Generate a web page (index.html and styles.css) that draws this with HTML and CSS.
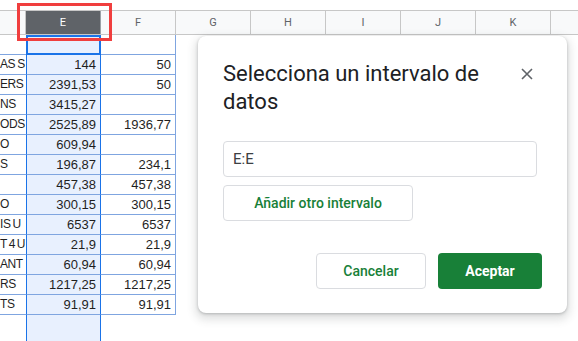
FILE: index.html
```html
<!DOCTYPE html>
<html lang="es">
<head>
    <meta charset="UTF-8">
    <meta name="viewport" content="width=device-width, initial-scale=1.0">
    <title>Seleccionar intervalo</title>
    <link rel="stylesheet" href="styles.css">
</head>
<body>
    <div class="sheet">
        <!-- Column headers -->
        <div class="col-head">
            <div class="hcell narrow"></div>
            <div class="hcell selected">E</div>
            <div class="hcell">F</div>
            <div class="hcell">G</div>
            <div class="hcell">H</div>
            <div class="hcell">I</div>
            <div class="hcell">J</div>
            <div class="hcell">K</div>
            <div class="hcell last"></div>
        </div>

        <!-- Rows -->
        <div class="row first">
            <div class="cell col-d"></div>
            <div class="cell col-e active"></div>
            <div class="cell col-f"></div>
        </div>
        <div class="row data">
            <div class="cell col-d">AS S</div>
            <div class="cell col-e">144</div>
            <div class="cell col-f">50</div>
        </div>
        <div class="row data">
            <div class="cell col-d">ERS</div>
            <div class="cell col-e">2391,53</div>
            <div class="cell col-f">50</div>
        </div>
        <div class="row data">
            <div class="cell col-d">NS</div>
            <div class="cell col-e">3415,27</div>
            <div class="cell col-f"></div>
        </div>
        <div class="row data">
            <div class="cell col-d">ODS</div>
            <div class="cell col-e">2525,89</div>
            <div class="cell col-f">1936,77</div>
        </div>
        <div class="row data">
            <div class="cell col-d">O</div>
            <div class="cell col-e">609,94</div>
            <div class="cell col-f"></div>
        </div>
        <div class="row data">
            <div class="cell col-d">S</div>
            <div class="cell col-e">196,87</div>
            <div class="cell col-f">234,1</div>
        </div>
        <div class="row data">
            <div class="cell col-d"></div>
            <div class="cell col-e">457,38</div>
            <div class="cell col-f">457,38</div>
        </div>
        <div class="row data">
            <div class="cell col-d">O</div>
            <div class="cell col-e">300,15</div>
            <div class="cell col-f">300,15</div>
        </div>
        <div class="row data">
            <div class="cell col-d">IS U</div>
            <div class="cell col-e">6537</div>
            <div class="cell col-f">6537</div>
        </div>
        <div class="row data">
            <div class="cell col-d">T 4 U</div>
            <div class="cell col-e">21,9</div>
            <div class="cell col-f">21,9</div>
        </div>
        <div class="row data">
            <div class="cell col-d">ANT</div>
            <div class="cell col-e">60,94</div>
            <div class="cell col-f">60,94</div>
        </div>
        <div class="row data">
            <div class="cell col-d">RS</div>
            <div class="cell col-e">1217,25</div>
            <div class="cell col-f">1217,25</div>
        </div>
        <div class="row data">
            <div class="cell col-d">TS</div>
            <div class="cell col-e">91,91</div>
            <div class="cell col-f">91,91</div>
        </div>
        <div class="row">
            <div class="cell col-d"></div>
            <div class="cell col-e"></div>
        </div>
        <div class="row">
            <div class="cell col-d"></div>
            <div class="cell col-e"></div>
        </div>
    </div>

    <!-- Highlight around the column header -->
    <div class="highlight"></div>

    <!-- Range dialog -->
    <div class="dialog">
        <div class="dialog-head">
            <h2>Selecciona un intervalo de datos</h2>
            <button class="close" type="button" aria-label="Cerrar">
                <svg width="12" height="12" viewBox="0 0 12 12">
                    <path d="M1 1 L11 11 M11 1 L1 11" stroke="#5f6368" stroke-width="1.6" fill="none"/>
                </svg>
            </button>
        </div>
        <div class="range-input">E:E</div>
        <button class="btn add" type="button">Añadir otro intervalo</button>
        <div class="actions">
            <button class="btn cancel" type="button">Cancelar</button>
            <button class="btn ok" type="button">Aceptar</button>
        </div>
    </div>
</body>
</html>
```

FILE: styles.css
```css
* {
    margin: 0;
    padding: 0;
    box-sizing: border-box;
}

body {
    background: #ffffff;
    width: 578px;
    height: 341px;
    overflow: hidden;
    position: relative;
    font-family: 'Liberation Sans', Arial, sans-serif;
}

.sheet {
    padding-top: 10px;
}

/* Column headers */
.col-head {
    display: flex;
    height: 25px;
    background: #f8f9fa;
    border-top: 1px solid #c7c7c7;
    border-bottom: 1px solid #c7c7c7;
}

.hcell {
    width: 75px;
    flex: none;
    border-right: 1px solid #c7c7c7;
    text-align: center;
    font-family: Roboto, sans-serif;
    font-size: 11px;
    line-height: 23px;
    color: #5f6368;
}

.hcell.narrow {
    width: 26px;
}

.hcell.last {
    flex: 1;
    border-right: none;
}

.hcell.selected {
    background: #5f6368;
    color: #ffffff;
    border-right-color: #9aa0a6;
}

/* Rows */
.row {
    display: flex;
    height: 20px;
    font-size: 13px;
    line-height: 19px;
    color: #1f1f1f;
}

.cell {
    flex: none;
    height: 20px;
    white-space: nowrap;
}

.col-d {
    width: 26px;
}

.col-e {
    width: 75px;
    text-align: right;
    padding-right: 4px;
    background: #e8f0fe;
    border-left: 1px solid #1a73e8;
    border-right: 1px solid #1a73e8;
}

.col-f {
    width: 75px;
    text-align: right;
    padding-right: 4px;
}

.row.first .col-d,
.row.first .col-f {
    border-bottom: 1px solid #7fa5e0;
}

.row.first .col-f {
    border-right: 1px solid #7fa5e0;
}

.row.first .col-e.active {
    border: 2px solid #1a73e8;
    height: 20px;
}

.row.data .cell {
    border-bottom: 1px solid #7fa5e0;
}

.row.data .col-f {
    border-right: 1px solid #7fa5e0;
}

.row.data .col-d {
    font-size: 12px;
    letter-spacing: -0.4px;
    word-spacing: -1px;
}

/* Red highlight box */
.highlight {
    position: absolute;
    left: 17px;
    top: 3px;
    width: 95px;
    height: 38px;
    border: 3px solid #f03e3e;
}

/* Dialog */
.dialog {
    position: absolute;
    left: 198px;
    top: 36px;
    width: 369px;
    height: 277px;
    background: #ffffff;
    border-radius: 8px;
    box-shadow: 0 4px 8px 3px rgba(60, 64, 67, 0.15), 0 1px 3px rgba(60, 64, 67, 0.3);
    padding: 24px 25px;
    font-family: Roboto, sans-serif;
}

.dialog-head {
    display: flex;
    justify-content: space-between;
    align-items: flex-start;
}

.dialog-head h2 {
    font-size: 22px;
    font-weight: 400;
    line-height: 28px;
    color: #202124;
    width: 270px;
}

.close {
    background: none;
    border: none;
    width: 24px;
    height: 24px;
    display: flex;
    align-items: center;
    justify-content: center;
    margin-top: 2px;
    margin-right: 3px;
}

.range-input {
    margin-top: 25px;
    width: 314px;
    height: 36px;
    border: 1px solid #dadce0;
    border-radius: 4px;
    padding-left: 9px;
    font-size: 15px;
    line-height: 34px;
    color: #3c4043;
}

.btn {
    height: 36px;
    border-radius: 4px;
    font-family: Roboto, sans-serif;
    font-size: 14px;
    font-weight: 500;
    cursor: pointer;
}

.add {
    margin-top: 8px;
    width: 190px;
    background: #ffffff;
    border: 1px solid #dadce0;
    color: #188038;
}

.actions {
    display: flex;
    justify-content: flex-end;
    gap: 12px;
    margin-top: 32px;
}

.cancel {
    width: 110px;
    background: #ffffff;
    border: 1px solid #dadce0;
    color: #188038;
}

.ok {
    width: 104px;
    background: #188038;
    border: none;
    color: #ffffff;
    font-weight: 700;
}
```
